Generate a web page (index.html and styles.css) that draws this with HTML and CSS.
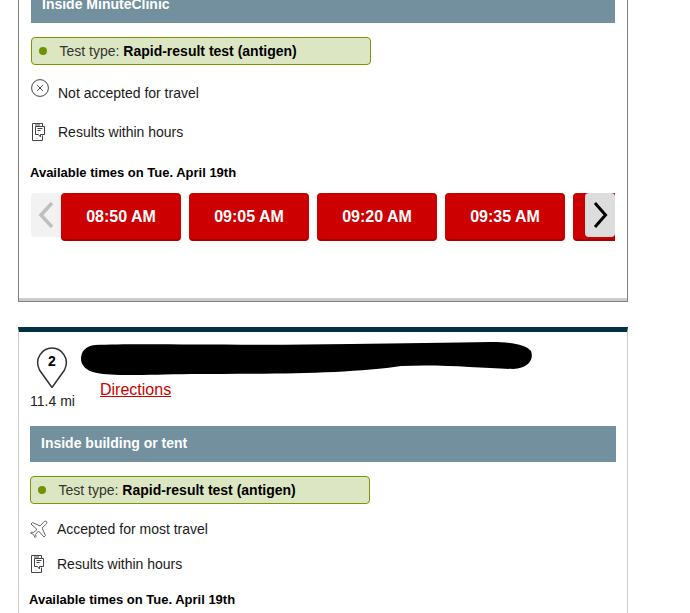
FILE: index.html
```html
<!doctype html>
<html>
    <head>
        <title>Test locations</title>
        <link rel="stylesheet" href="styles.css">
    </head>
    <body>
        <div class="results">
            <div class="card card_open">
                <div class="band">Inside MinuteClinic</div>
                <div class="test_type"><span class="dot"></span>Test type:&nbsp;<b>Rapid-result test (antigen)</b></div>
                <div class="info info_travel_none">
                    <svg class="icon" viewBox="0 0 18 18"><circle cx="9" cy="9" r="8.4"/><path d="M6.200 6.200l5.600 5.600M11.800 6.200l-5.600 5.600"/></svg>
                    <span>Not accepted for travel</span>
                </div>
                <div class="info info_results">
                    <svg class="icon" viewBox="0 0 18 18"><path d="M11.500 3V.5h-10v17h10v-5M4 2h5M6 15.500v.5"/><path d="M4.500 3.500h9v8h-4V14l-2-2.500h-3zM6.500 5.500h5M6.500 7.500h3"/></svg>
                    <span>Results within hours</span>
                </div>
                <div class="times_title">Available times on Tue. April 19th</div>
                <div class="times">
                    <div class="arrow arrow_prev"><svg viewBox="0 0 30 44"><path d="M21 10L10 22l11 12"/></svg></div>
                    <div class="slot">08:50 AM</div>
                    <div class="slot">09:05 AM</div>
                    <div class="slot">09:20 AM</div>
                    <div class="slot">09:35 AM</div>
                    <div class="slot"></div>
                    <div class="arrow arrow_next"><svg viewBox="0 0 30 44"><path d="M10 10l10.500 12L10 34"/></svg></div>
                </div>
            </div>

            <div class="card card_second">
                <div class="place">
                    <div class="pin_box">
                        <div class="pin">
                            <svg viewBox="0 0 32 41"><path d="M16 40.500L3.500 23C-2 12 6 1 16 1s18 11 12.500 22z"/></svg>
                            <b>2</b>
                        </div>
                        <div class="miles">11.4 mi</div>
                    </div>
                    <div class="place_text">
                        <svg class="scribble" viewBox="0 0 452 34"><path d="M14 3C60 1 160 4 270 2 320 1 370 1 410 0 430 0 445 3 450 9 453 17 448 26 432 27 400 26 360 22 320 24 270 32 180 32 110 32 60 33 30 34 16 31 4 29 0 22 0 17 0 9 5 4 14 3z"/></svg>
                        <a class="directions" href="#">Directions</a>
                    </div>
                </div>
                <div class="band">Inside building or tent</div>
                <div class="test_type"><span class="dot"></span>Test type:&nbsp;<b>Rapid-result test (antigen)</b></div>
                <div class="info info_travel">
                    <svg class="icon icon_plane" viewBox="0 0 18 18"><path d="M16.500 1.500c.8.8.2 2-1 3.200L12 8l3.500 7.500-1.500 1.500L8.500 11l-3 3.500.5 2-1 1-1.500-3-3-1.500 1-1 2 .5L7 9.500 1 4l1.500-1.500L10 6l3.300-3.500c1.200-1.200 2.400-1.800 3.200-1z"/></svg>
                    <span>Accepted for most travel</span>
                </div>
                <div class="info info_results_second">
                    <svg class="icon" viewBox="0 0 18 18"><path d="M11.500 3V.5h-10v17h10v-5M4 2h5M6 15.500v.5"/><path d="M4.500 3.500h9v8h-4V14l-2-2.500h-3zM6.500 5.500h5M6.500 7.500h3"/></svg>
                    <span>Results within hours</span>
                </div>
                <div class="times_title">Available times on Tue. April 19th</div>
            </div>
        </div>
    </body>
</html>
```

FILE: styles.css
```css
html, body {
    height:100%;
}

body {
    margin:0;
    overflow:hidden;
    background-color:#ffffff;
    color:#000000;
    font-family:"Liberation Sans", Arial, sans-serif;
    font-size:14px;
}

.results {
    width:610px;
    margin-left:18px;
    margin-top:-20px;
}

.card {
    box-sizing:border-box;
    background-color:#ffffff;
}

.card_open {
    height:322px;
    padding:6px 12px 0 12px;
    border:1px solid #808080;
    box-shadow:inset 0 -3px 0 #cccccc;
}

.card_second {
    margin-top:25px;
    height:320px;
    padding:0 11px 0 11px;
    border-top:5px solid #003145;
    border-left:1px solid #cccccc;
    border-right:1px solid #cccccc;
}

.band {
    height:36px;
    line-height:34px;
    padding-left:11px;
    background-color:#72909d;
    color:#ffffff;
    font-weight:bold;
}

.test_type {
    box-sizing:border-box;
    display:flex;
    align-items:center;
    width:340px;
    height:28px;
    margin-top:14px;
    padding-left:7px;
    background-color:#dde6c2;
    border:1px solid #789904;
    border-radius:4px;
    color:#333333;
}

.test_type b {
    color:#000000;
}

.dot {
    width:8px;
    height:8px;
    margin-right:12.500px;
    border-radius:50%;
    background-color:#6f9200;
}

.info {
    display:flex;
    align-items:center;
    height:18px;
    color:#1a1a1a;
}

.info_travel_none {
    margin-top:14px;
    align-items:flex-start;
    height:20px;
}

.info_travel_none span {
    margin-top:6px;
}

.info_results {
    margin-top:24px;
}

.info_travel {
    margin-top:16px;
}

.info_results_second {
    margin-top:17px;
}

.icon {
    flex:none;
    width:18px;
    height:18px;
    margin-right:9px;
    fill:none;
    stroke:#444444;
    stroke-width:1;
}

.icon_plane {
    stroke:#666666;
}

.times_title {
    margin-left:-1px;
    font-size:13px;
    font-weight:bold;
    line-height:16px;
}

.card_open .times_title {
    margin-top:24px;
}

.card_second .times_title {
    margin-top:19px;
}

.times {
    position:relative;
    display:flex;
    gap:8px;
    width:584px;
    height:48px;
    margin-top:12px;
    overflow:hidden;
}

.slot {
    box-sizing:border-box;
    flex:none;
    width:120px;
    height:48px;
    line-height:48px;
    background-color:#cc0000;
    border-bottom:2px solid #a80000;
    border-radius:4px;
    color:#ffffff;
    font-size:16px;
    font-weight:bold;
    text-align:center;
}

.arrow {
    flex:none;
    width:30px;
    height:44px;
    border-radius:4px;
}

.arrow svg {
    display:block;
    width:30px;
    height:44px;
    fill:none;
    stroke-width:3.500;
}

.arrow_prev {
    margin-right:-8px;
    background-color:#f2f2f2;
    border-radius:4px 0 0 4px;
}

.arrow_prev svg {
    stroke:#bfbfbf;
}

.arrow_next {
    position:absolute;
    top:0;
    right:0;
    background-color:#dddddd;
}

.arrow_next svg {
    stroke:#000000;
    stroke-width:3;
}

.place {
    display:flex;
    height:94px;
}

.pin_box {
    width:45px;
    margin-top:15px;
    text-align:center;
}

.pin {
    position:relative;
    width:32px;
    height:41px;
    margin:0 0 0 6px;
}

.pin svg {
    display:block;
    width:32px;
    height:41px;
    fill:#ffffff;
    stroke:#333333;
    stroke-width:1.500;
}

.pin b {
    position:absolute;
    top:6px;
    left:0;
    width:32px;
    font-size:14px;
    text-align:center;
}

.miles {
    margin-top:5px;
    color:#222222;
}

.place_text {
    margin-left:6px;
    padding-top:10px;
}

.scribble {
    display:block;
    width:452px;
    height:34px;
    fill:#000000;
}

.directions {
    display:block;
    margin-top:5px;
    margin-left:19px;
    color:#cc0000;
    font-size:16px;
    line-height:18px;
}
```
